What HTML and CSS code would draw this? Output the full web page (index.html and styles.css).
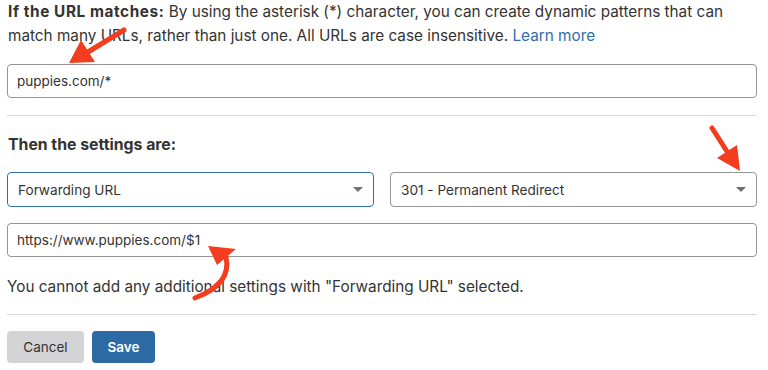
FILE: index.html
```html
<!DOCTYPE html>
<html lang="en">
<head>
    <meta charset="UTF-8">
    <meta name="viewport" content="width=device-width, initial-scale=1.0">
    <title>Page Rule</title>
    <link rel="stylesheet" href="styles.css">
</head>
<body>
    <div class="rule-form">
        <p class="intro">
            <strong>If the URL matches:</strong> By using the asterisk (*) character, you can create dynamic patterns that can match many URLs, rather than just one. All URLs are case insensitive. <a href="#">Learn more</a>
        </p>

        <input class="text-input url-input" type="text" value="puppies.com/*">

        <hr class="divider">

        <h2 class="section-title">Then the settings are:</h2>

        <div class="select-row">
            <div class="select-wrap">
                <select class="select focused">
                    <option>Forwarding URL</option>
                </select>
            </div>
            <div class="select-wrap">
                <select class="select">
                    <option>301 - Permanent Redirect</option>
                </select>
            </div>
        </div>

        <input class="text-input dest-input" type="text" value="https://www.puppies.com/$1">

        <p class="note">You cannot add any additional settings with "Forwarding URL" selected.</p>

        <hr class="divider bottom">

        <div class="actions">
            <button class="btn btn-cancel" type="button">Cancel</button>
            <button class="btn btn-save" type="button">Save</button>
        </div>

        <!-- annotation arrows -->
        <svg class="annotations" width="768" height="370" viewBox="0 0 768 370">
            <g fill="#f43d1f" stroke="none">
                <line x1="124" y1="30" x2="88" y2="52" stroke="#f43d1f" stroke-width="5" stroke-linecap="round"/>
                <polygon points="69,63 81,40 95,62"/>

                <line x1="712" y1="128" x2="728" y2="153" stroke="#f43d1f" stroke-width="5" stroke-linecap="round"/>
                <polygon points="740,171 717,158 737,145"/>

                <path d="M195,298 Q232,284 226,257" fill="none" stroke="#f43d1f" stroke-width="5" stroke-linecap="round"/>
                <polygon points="208,246 236,249 217,265"/>
            </g>
        </svg>
    </div>
</body>
</html>
```

FILE: styles.css
```css
body {
    margin: 0;
    padding: 0;
    font-family: Inter, "Noto Sans", sans-serif;
    color: #333;
    background-color: #fff;
}

.rule-form {
    position: relative;
    width: 750px;
    height: 370px;
    padding: 0 7px;
}

.intro {
    margin: 0;
    font-size: 15.3px;
    line-height: 24px;
    padding-left: 1px;
}

.intro strong {
    font-weight: 700;
    letter-spacing: 0.6px;
}

.intro a {
    color: #2f6eab;
    text-decoration: none;
}

.text-input {
    display: block;
    box-sizing: border-box;
    width: 750px;
    height: 34px;
    padding: 0 9px;
    border: 1px solid #959595;
    border-radius: 4px;
    font-family: inherit;
    font-size: 13.5px;
    color: #333;
    background: #fff;
    outline: none;
}

.url-input {
    margin-top: 16px;
}

.divider {
    margin: 17px 0 0;
    border: none;
    border-top: 1px solid #d9d9d9;
    width: 750px;
}

.section-title {
    margin: 17px 0 0;
    padding-left: 1px;
    font-size: 15.8px;
    line-height: 24px;
    font-weight: 700;
}

.select-row {
    display: flex;
    gap: 16px;
    margin-top: 15px;
}

.select-wrap {
    position: relative;
    flex: 1;
}

.select-wrap::after {
    content: "";
    position: absolute;
    right: 11px;
    top: 15px;
    border-left: 5px solid transparent;
    border-right: 5px solid transparent;
    border-top: 5px solid #707070;
    pointer-events: none;
}

.select {
    appearance: none;
    -webkit-appearance: none;
    width: 100%;
    height: 35px;
    padding: 0 10px;
    border: 1px solid #959595;
    border-radius: 4px;
    font-family: inherit;
    font-size: 13.6px;
    color: #333;
    background: #fff;
    outline: none;
}

.select.focused {
    border-color: #2f6eab;
}

.dest-input {
    margin-top: 16px;
}

.note {
    margin: 18px 0 0;
    font-size: 15.3px;
    line-height: 24px;
}

.divider.bottom {
    margin-top: 15px;
}

.actions {
    display: flex;
    gap: 8px;
    margin-top: 16px;
}

.btn {
    height: 32px;
    padding: 0;
    border: none;
    border-radius: 4px;
    font-family: inherit;
    font-size: 13.5px;
    cursor: pointer;
}

.btn-cancel {
    background-color: #d4d4d6;
    color: #333;
    width: 77px;
}

.btn-save {
    background-color: #2c6aa4;
    color: #fff;
    font-weight: 600;
    width: 63px;
}

.annotations {
    position: absolute;
    left: 0;
    top: 0;
    pointer-events: none;
}
```
